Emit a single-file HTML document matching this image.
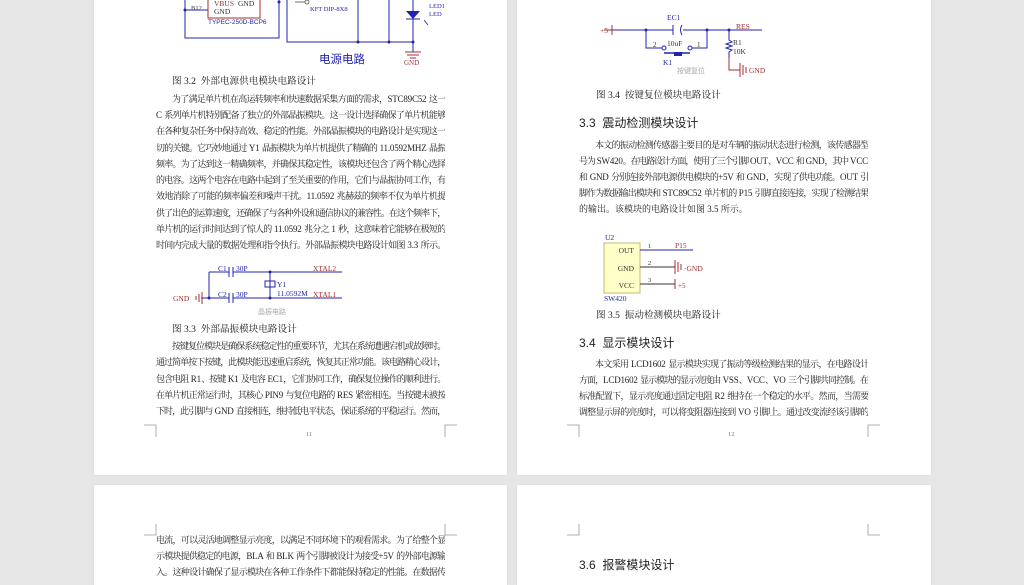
<!DOCTYPE html>
<html><head><meta charset="utf-8">
<style>
body{margin:0;width:1024px;height:575px;background:#e6e6e6;position:relative;overflow:hidden;font-family:"Liberation Serif","Noto Serif CJK SC",serif;color:#222}
.pg{position:absolute;background:#fff;box-shadow:0 0 2px #d0d0d0}
.l{position:absolute;width:289px;font-size:9px;letter-spacing:-1.2px;line-height:16px;height:16px;text-align:justify;text-align-last:justify;overflow:hidden;white-space:nowrap}
.l b{font-weight:normal;letter-spacing:-0.2px}
.i{text-indent:16px}
.lst{text-align-last:left;letter-spacing:0}
.cap{position:absolute;font-size:9.6px;line-height:16px}
.h{position:absolute;font-family:"Liberation Sans","Noto Sans CJK SC",sans-serif;font-size:12px;line-height:16px;color:#222}
svg{position:absolute;left:0;top:0}
</style></head><body>
<div class="pg" style="left:94px;top:-10px;width:413px;height:485px"></div>
<div class="pg" style="left:517px;top:-10px;width:414px;height:485px"></div>
<div class="pg" style="left:94px;top:485px;width:413px;height:100px"></div>
<div class="pg" style="left:517px;top:485px;width:414px;height:100px"></div>

<svg width="1024" height="575" font-family="Liberation Serif, serif">
<g fill="none" stroke="#2323b0" stroke-width="1">
<path d="M185 0V38H279V0M185 10H208"/>
<path d="M287 0V42H413M358 0V42M389 0V42M413 0V52"/>
</g>
<rect x="208" y="-2" width="52" height="20" fill="none" stroke="#a03030"/>
<circle cx="185" cy="10" r="1.5" fill="#2323b0"/><circle cx="279" cy="2" r="1.5" fill="#2323b0"/>
<circle cx="358" cy="42" r="1.5" fill="#2323b0"/><circle cx="389" cy="42" r="1.5" fill="#2323b0"/><circle cx="413" cy="42" r="1.5" fill="#2323b0"/>
<circle cx="307" cy="2" r="2" fill="#fff" stroke="#333" stroke-width=".7"/>
<path d="M295 2H305" stroke="#333" stroke-width=".7"/>
<text x="214" y="6" font-size="7.5" fill="#a03030">VBUS</text><text x="238" y="6" font-size="7.5" fill="#333">GND</text>
<text x="214" y="14" font-size="7.5" fill="#333">GND</text>
<text x="191" y="10" font-size="6.5" fill="#333">B12</text>
<text x="208" y="24" font-size="6.5" fill="#2323b0" font-family="Liberation Sans">TYPEC-250D-BCP6</text>
<text x="310" y="11" font-size="6.5" fill="#2323b0">KFT DIP-8X8</text>
<path d="M406 11H420L413 19Z" fill="#2323b0"/><path d="M406 19H420" stroke="#2323b0"/>
<path d="M424 20L428 25" stroke="#2323b0" stroke-width=".8"/>
<text x="429" y="8" font-size="6.5" fill="#2323b0">LED1</text><text x="429" y="16" font-size="6.5" fill="#2323b0">LED</text>
<path d="M405 52H421M407 55H419M410 58H416" stroke="#a03030"/>
<text x="404" y="65" font-size="7" fill="#a03030">GND</text>
<text x="319" y="63" font-size="11.5" fill="#2323b0" font-family="Noto Sans CJK SC, sans-serif">电源电路</text>

<g stroke="#2323b0" fill="none">
<path d="M209 272H229M233 272H342M209 298H229M233 298H342M209 272V298M270 272V298M201 298H209"/>
<path d="M229 267V277M233 267V277M229 293V303M233 293V303"/>
<rect x="265" y="281" width="10" height="6"/>
</g>
<path d="M202 292V304M199 294V302M196 296V300" stroke="#a03030"/>
<circle cx="209" cy="298" r="1.5" fill="#2323b0"/><circle cx="270" cy="272" r="1.5" fill="#2323b0"/><circle cx="270" cy="298" r="1.5" fill="#2323b0"/>
<text x="218" y="271" font-size="7.5" fill="#2323b0">C1</text><text x="236" y="271" font-size="7.5" fill="#2323b0">30P</text>
<text x="218" y="297" font-size="7.5" fill="#2323b0">C2</text><text x="236" y="297" font-size="7.5" fill="#2323b0">30P</text>
<text x="313" y="271" font-size="7.5" fill="#a03030">XTAL2</text><text x="313" y="297" font-size="7.5" fill="#a03030">XTAL1</text>
<text x="277" y="287" font-size="7.5" fill="#2323b0">Y1</text><text x="277" y="296" font-size="7.5" fill="#2323b0">11.0592M</text>
<text x="173" y="301" font-size="7.5" fill="#a03030">GND</text>
<text x="258" y="314" font-size="7" fill="#aaa" font-family="Noto Sans CJK SC, sans-serif">晶振电路</text>

<g stroke="#2323b0" fill="none">
<path d="M612 30H673M683 30H762M646 30V48H662M692 48H707V30M729 30V40l3 2-6 2 6 2-6 2 6 2-3 2V58"/>
<path d="M673 25V35"/><path d="M682 25Q679 30 682 35"/>
<circle cx="664" cy="48" r="2" fill="#fff"/><circle cx="690" cy="48" r="2" fill="#fff"/>
</g>
<path d="M664 53H690" stroke="#2323b0" stroke-width="1.5"/><rect x="674" y="52" width="8" height="4" fill="#2323b0"/>
<path d="M612 25V35M604 30H612M729 58V70H740M740 63V77M743 65V75M746 67V73" stroke="#a03030" fill="none"/>
<circle cx="646" cy="30" r="1.5" fill="#2323b0"/><circle cx="707" cy="30" r="1.5" fill="#2323b0"/><circle cx="729" cy="30" r="1.5" fill="#2323b0"/>
<text x="600" y="33" font-size="7.5" fill="#a03030">+5</text>
<text x="667" y="20" font-size="7.5" fill="#2323b0">EC1</text>
<text x="736" y="29" font-size="7.5" fill="#a03030">RES</text>
<text x="653" y="47" font-size="7" fill="#333">2</text><text x="667" y="46" font-size="7.5" fill="#333">10uF</text><text x="697" y="47" font-size="7" fill="#333">1</text>
<text x="733" y="45" font-size="7.5" fill="#333">R1</text><text x="733" y="54" font-size="7.5" fill="#333">10K</text>
<text x="663" y="65" font-size="7.5" fill="#2323b0">K1</text>
<text x="677" y="73" font-size="7" fill="#aaa" font-family="Noto Sans CJK SC, sans-serif">按键复位</text>
<text x="749" y="73" font-size="7.5" fill="#a03030">GND</text>

<rect x="604" y="243" width="36" height="50" fill="#ffffc8" stroke="#c8b870"/>
<text x="605" y="240" font-size="7.5" fill="#2323b0">U2</text>
<text x="634" y="253" font-size="7.5" fill="#333" text-anchor="end">OUT</text>
<text x="634" y="271" font-size="7.5" fill="#333" text-anchor="end">GND</text>
<text x="634" y="288" font-size="7.5" fill="#333" text-anchor="end">VCC</text>
<path d="M640 250H693" stroke="#2323b0"/>
<path d="M640 267H675M640 284H675" stroke="#333"/>
<path d="M675 260V274M678 262V272M681 264V270M675 279V289" stroke="#a03030"/>
<text x="648" y="248" font-size="6.5" fill="#333">1</text><text x="648" y="265" font-size="6.5" fill="#333">2</text><text x="648" y="282" font-size="6.5" fill="#333">3</text>
<text x="675" y="248" font-size="7.5" fill="#a03030">P15</text>
<text x="684" y="271" font-size="7.5" fill="#a03030">·GND</text>
<text x="678" y="288" font-size="7" fill="#a03030">+5</text>
<text x="604" y="301" font-size="7.5" fill="#2323b0">SW420</text>

<g stroke="#999" fill="none" stroke-width=".8">
<path d="M144 425H156V437M457 425H445V437M567 425H579V437M880 425H868V437"/>
<path d="M144 535H156V524M457 535H445V524M567 535H579V524M880 535H868V524"/>
</g>
<text x="306" y="436" font-size="6.5" fill="#777">11</text>
<text x="728" y="436" font-size="6.5" fill="#777">12</text>
</svg>

<div class="cap" style="left:172px;top:74px">图 3.2&nbsp; 外部电源供电模块电路设计</div>
<div class="l i" style="left:156px;top:91px">为了满足单片机在高运转频率和快速数据采集方面的需求，<b>STC89C52 </b>这一</div>
<div class="l" style="left:156px;top:107px"><b>C </b>系列单片机特别配备了独立的外部晶振模块。这一设计选择确保了单片机能够</div>
<div class="l" style="left:156px;top:123px">在各种复杂任务中保持高效、稳定的性能。外部晶振模块的电路设计是实现这一</div>
<div class="l" style="left:156px;top:140px">切的关键。它巧妙地通过<b> Y1 </b>晶振模块为单片机提供了精确的<b> 11.0592MHZ </b>晶振</div>
<div class="l" style="left:156px;top:156px">频率。为了达到这一精确频率，并确保其稳定性，该模块还包含了两个精心选择</div>
<div class="l" style="left:156px;top:172px">的电容。这两个电容在电路中起到了至关重要的作用，它们与晶振协同工作，有</div>
<div class="l" style="left:156px;top:188px">效地消除了可能的频率偏差和噪声干扰。<b>11.0592 </b>兆赫兹的频率不仅为单片机提</div>
<div class="l" style="left:156px;top:205px">供了出色的运算速度，还确保了与各种外设和通信协议的兼容性。在这个频率下，</div>
<div class="l" style="left:156px;top:221px">单片机的运行时间达到了惊人的<b> 11.0592 </b>兆分之<b> 1 </b>秒，这意味着它能够在极短的</div>
<div class="l" style="left:156px;top:237px">时间内完成大量的数据处理和指令执行。外部晶振模块电路设计如图<b> 3.3 </b>所示。</div>

<div class="cap" style="left:172px;top:322px">图 3.3&nbsp; 外部晶振模块电路设计</div>
<div class="l i" style="left:156px;top:338px">按键复位模块是确保系统稳定性的重要环节，尤其在系统遭遇宕机或故障时。</div>
<div class="l" style="left:156px;top:354px">通过简单按下按键，此模块能迅速重启系统，恢复其正常功能。该电路精心设计，</div>
<div class="l" style="left:156px;top:371px">包含电阻<b> R1</b>、按键<b> K1 </b>及电容<b> EC1</b>，它们协同工作，确保复位操作的顺利进行。</div>
<div class="l" style="left:156px;top:387px">在单片机正常运行时，其核心<b> PIN9 </b>与复位电路的<b> RES </b>紧密相连。当按键未被按</div>
<div class="l" style="left:156px;top:403px">下时，此引脚与<b> GND </b>直接相连，维持低电平状态，保证系统的平稳运行。然而，</div>

<div class="l" style="left:156px;top:532px">电流，可以灵活地调整显示亮度，以满足不同环境下的观看需求。为了给整个显</div>
<div class="l" style="left:156px;top:548px">示模块提供稳定的电源，<b>BLA </b>和<b> BLK </b>两个引脚被设计为接受<b>+5V </b>的外部电源输</div>
<div class="l" style="left:156px;top:564px">入。这种设计确保了显示模块在各种工作条件下都能保持稳定的性能。在数据传</div>

<div class="cap" style="left:596px;top:88px">图 3.4&nbsp; 按键复位模块电路设计</div>
<div class="h" style="left:579px;top:115px">3.3&nbsp; 震动检测模块设计</div>
<div class="l i" style="left:579px;top:137px">本文的振动检测传感器主要目的是对车辆的振动状态进行检测，该传感器型</div>
<div class="l" style="left:579px;top:153px">号为<b> SW420</b>。在电路设计方面，使用了三个引脚<b> OUT</b>、<b>VCC </b>和<b> GND</b>，其中<b> VCC</b></div>
<div class="l" style="left:579px;top:169px">和<b> GND </b>分别连接外部电源供电模块的<b>+5V </b>和<b> GND</b>，实现了供电功能。<b>OUT </b>引</div>
<div class="l" style="left:579px;top:185px">脚作为数据输出模块和<b> STC89C52 </b>单片机的<b> P15 </b>引脚直接连接，实现了检测结果</div>
<div class="l lst" style="left:579px;top:201px">的输出。该模块的电路设计如图 3.5 所示。</div>
<div class="cap" style="left:596px;top:308px">图 3.5&nbsp; 振动检测模块电路设计</div>
<div class="h" style="left:579px;top:335px">3.4&nbsp; 显示模块设计</div>
<div class="l i" style="left:579px;top:356px">本文采用<b> LCD1602 </b>显示模块实现了振动等级检测结果的显示，在电路设计</div>
<div class="l" style="left:579px;top:372px">方面，<b>LCD1602 </b>显示模块的显示亮度由<b> VSS</b>、<b>VCC</b>、<b>VO </b>三个引脚共同控制。在</div>
<div class="l" style="left:579px;top:388px">标准配置下，显示亮度通过固定电阻<b> R2 </b>维持在一个稳定的水平。然而，当需要</div>
<div class="l" style="left:579px;top:404px">调整显示屏的亮度时，可以将变阻器连接到<b> VO </b>引脚上。通过改变流经该引脚的</div>
<div class="h" style="left:579px;top:557px">3.6&nbsp; 报警模块设计</div>
</body></html>
